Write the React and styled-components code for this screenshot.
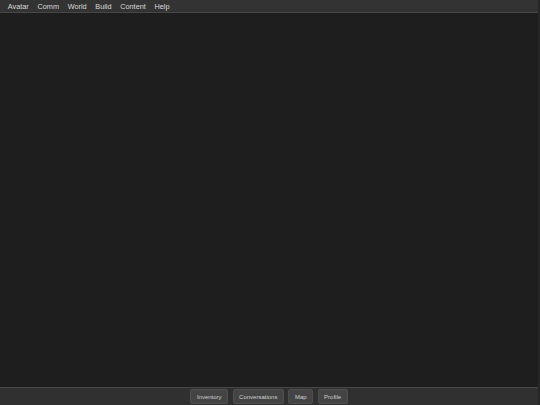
import styled, { createGlobalStyle } from "styled-components";

const GlobalStyle = createGlobalStyle`
  html, body, #root {
    margin: 0;
    height: 100%;
  }
  body {
    background: #1e1e1e;
    font-family: "Liberation Sans", Arial, sans-serif;
  }
`;

const menus = ["Avatar", "Comm", "World", "Build", "Content", "Help"];
const tabs = ["Inventory", "Conversations", "Map", "Profile"];

function App() {
  return (
    <>
      <GlobalStyle />
      <Screen>
        <MenuBar>
          {menus.map((m) => (
            <MenuItem key={m}>{m}</MenuItem>
          ))}
        </MenuBar>
        <Viewport />
        <BottomBar>
          {tabs.map((t) => (
            <TabButton key={t}>{t}</TabButton>
          ))}
        </BottomBar>
      </Screen>
    </>
  );
}

export default App;

const Screen = styled.div`
  display: flex;
  flex-direction: column;
  height: 100%;
  border-right: 2px solid #272727;
  box-sizing: border-box;
`;

const MenuBar = styled.div`
  display: flex;
  align-items: center;
  height: 12px;
  padding: 0 3.5px;
  background: #333333;
  border-bottom: 1px solid #474747;
`;

const MenuItem = styled.span`
  padding: 0 4.35px;
  font-size: 7.3px;
  color: #d8d8d8;
  cursor: default;
`;

const Viewport = styled.div`
  flex: 1;
  background: #1e1e1e;
`;

const BottomBar = styled.div`
  display: flex;
  justify-content: center;
  align-items: center;
  gap: 4.5px;
  height: 17px;
  background: #303030;
  border-top: 1px solid #474747;
`;

const TabButton = styled.button`
  height: 15px;
  padding: 0 5.5px;
  background: #444444;
  border: 1px solid #4e4e4e;
  border-radius: 2px;
  font-family: "Liberation Sans", Arial, sans-serif;
  font-size: 6px;
  color: #cfcfcf;
  cursor: pointer;
`;
